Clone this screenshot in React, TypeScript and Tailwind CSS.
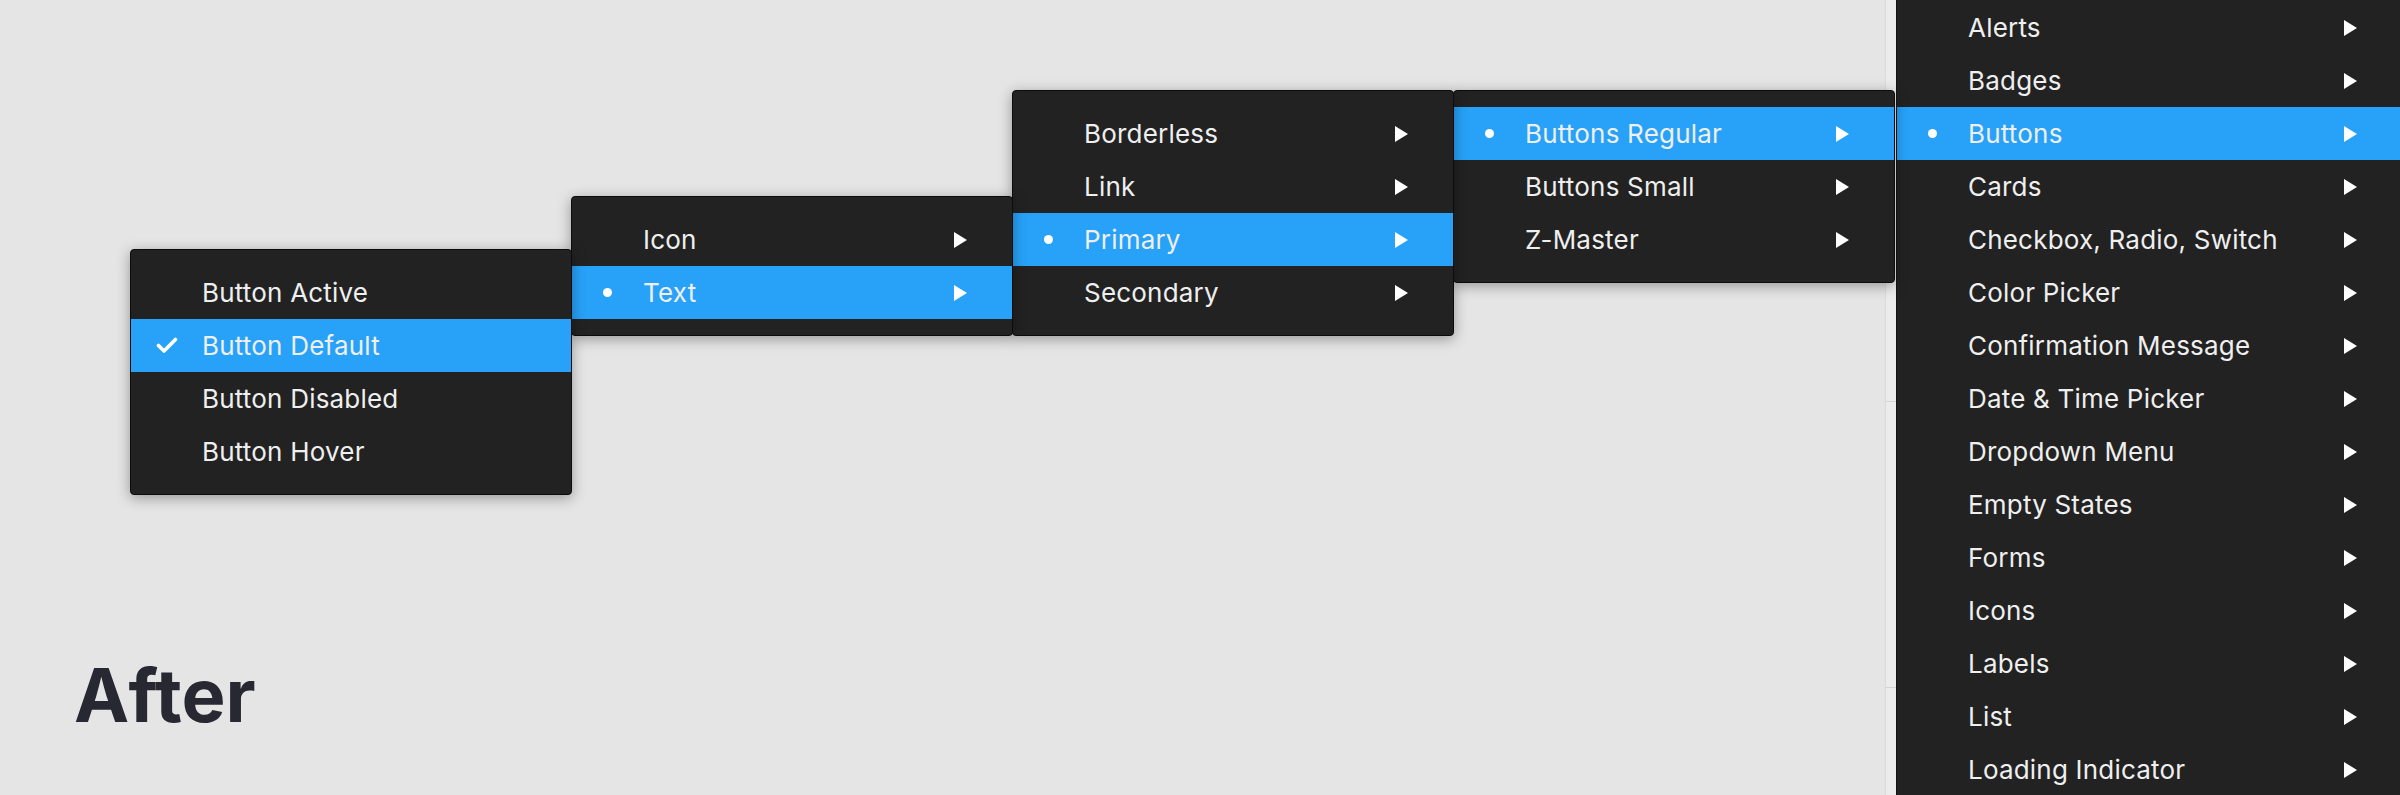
import React from 'react';

type Mark = 'none' | 'check' | 'dot';

interface Item {
    label: string;
    active?: boolean;
    mark?: Mark;
    sub?: boolean;
}

const Arrow = () => (
    <svg width="13" height="16" viewBox="0 0 13 16" className="shrink-0">
        <path d="M0 0 L13 8 L0 16 Z" fill="#ffffff" />
    </svg>
);

const Check = () => (
    <svg width="22" height="17" viewBox="0 0 22 17">
        <path d="M2.5 8.5 L8 14 L19.5 2.5" fill="none" stroke="#ffffff" strokeWidth="3.6" strokeLinecap="round" strokeLinejoin="round" />
    </svg>
);

const Row: React.FC<{ item: Item; right: string }> = ({ item, right }) => (
    <div className={`flex h-[53px] items-center ${item.active ? 'bg-[#27a2f8]' : ''}`}>
        <div className="flex w-[71px] shrink-0 items-center justify-center">
            {item.mark === 'check' && <Check />}
            {item.mark === 'dot' && <span className="h-[9px] w-[9px] rounded-full bg-white" />}
        </div>
        <span className="flex-1 whitespace-nowrap text-[26px] tracking-[0.2px] text-[#efefef]">{item.label}</span>
        {item.sub && <div className={right}><Arrow /></div>}
    </div>
);

const Menu: React.FC<{ items: Item[]; className: string }> = ({ items, className }) => (
    <div className={`relative w-[442px] shrink-0 rounded-[4px] border border-[#0c0c0c] bg-[#222222] py-4 shadow-[0_3px_14px_rgba(0,0,0,0.35)] ${className}`}>
        {items.map((it) => (
            <Row key={it.label} item={it} right="pr-[45px]" />
        ))}
    </div>
);

const states: Item[] = [
    { label: 'Button Active' },
    { label: 'Button Default', active: true, mark: 'check' },
    { label: 'Button Disabled' },
    { label: 'Button Hover' },
];

const kinds: Item[] = [
    { label: 'Icon', sub: true },
    { label: 'Text', active: true, mark: 'dot', sub: true },
];

const styles: Item[] = [
    { label: 'Borderless', sub: true },
    { label: 'Link', sub: true },
    { label: 'Primary', active: true, mark: 'dot', sub: true },
    { label: 'Secondary', sub: true },
];

const sizes: Item[] = [
    { label: 'Buttons Regular', active: true, mark: 'dot', sub: true },
    { label: 'Buttons Small', sub: true },
    { label: 'Z-Master', sub: true },
];

const components: Item[] = [
    'Alerts',
    'Badges',
    'Buttons',
    'Cards',
    'Checkbox, Radio, Switch',
    'Color Picker',
    'Confirmation Message',
    'Date & Time Picker',
    'Dropdown Menu',
    'Empty States',
    'Forms',
    'Icons',
    'Labels',
    'List',
    'Loading Indicator',
].map((label) => ({
    label,
    sub: true,
    active: label === 'Buttons',
    mark: label === 'Buttons' ? ('dot' as Mark) : ('none' as Mark),
}));

export default function App() {
    return (
        <div className="flex h-[795px] w-[2400px] overflow-hidden bg-[#e5e5e5]" style={{ fontFamily: 'Inter, "Noto Sans", sans-serif' }}>
            <div className="relative z-10 flex w-[1885px] shrink-0 flex-col">
                <div className="flex items-start pl-[130px]">
                    <Menu items={states} className="z-40 mt-[249px]" />
                    <Menu items={kinds} className="z-30 -ml-px mt-[196px]" />
                    <Menu items={styles} className="z-20 -ml-px mt-[90px]" />
                    <Menu items={sizes} className="z-10 -ml-px mt-[90px]" />
                </div>
                <h1 className="mt-auto pb-[63px] pl-[74px] text-[74px] font-bold leading-none text-[#282833]">After</h1>
            </div>
            <div className="flex h-full flex-1">
                <div className="flex w-[11px] shrink-0 flex-col border-l border-[#dadada] bg-[#ececec]">
                    <div className="h-[402px] border-b border-[#d4d4d4]" />
                    <div className="h-[286px] border-b border-[#d4d4d4]" />
                </div>
                <div className="h-full flex-1 border-l border-[#141414] bg-[#222222] pt-px">
                    {components.map((it) => (
                        <Row key={it.label} item={it} right="pr-[43px]" />
                    ))}
                </div>
            </div>
        </div>
    );
}
